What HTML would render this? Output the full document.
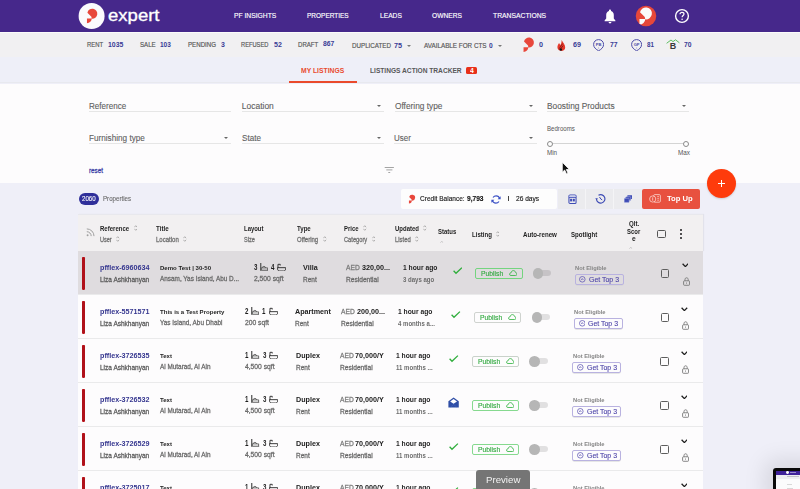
<!DOCTYPE html>
<html><head><meta charset="utf-8"><title>Listings</title><style>*{margin:0;padding:0;box-sizing:border-box}
html,body{width:800px;height:489px;overflow:hidden}
body{filter:blur(0.25px);background:#efeff8;font-family:"Liberation Sans",sans-serif;position:relative}
.abs{position:absolute}
.t{position:absolute;white-space:nowrap;line-height:1;transform-origin:0 0}
.n{-webkit-text-stroke:0.28px currentColor}
.m{-webkit-text-stroke:0.12px currentColor}</style></head><body>
<div class="abs" style="left:0;top:0;width:800px;height:32px;background:#46288b"></div>
<svg class="abs" style="left:0;top:0;overflow:visible" width="800" height="489" viewBox="0 0 800 489"><circle cx="91.6" cy="16" r="13" fill="#fbfafd"/><path d="M87.40 12.75A5.00 5.00 0 1 1 91.75 18.70L91.40 16.80ZM86.95 18.40H91.75A4.80 4.80 0 0 1 86.95 23.20Z" fill="#e8473b"/></svg>
<div class="t" style="left:107.50px;top:6.61px;font-size:17.00px;font-weight:normal;color:#ffffff;transform:scaleX(1.090);-webkit-text-stroke:0.35px #fff;">expert</div>
<div class="t" style="left:233.50px;top:12.40px;font-size:7.67px;font-weight:normal;color:#ffffff;transform:scaleX(0.880);-webkit-text-stroke:0.15px #fff;">PF INSIGHTS</div>
<div class="t" style="left:306.70px;top:12.40px;font-size:7.67px;font-weight:normal;color:#ffffff;transform:scaleX(0.847);-webkit-text-stroke:0.15px #fff;">PROPERTIES</div>
<div class="t" style="left:379.50px;top:12.40px;font-size:7.67px;font-weight:normal;color:#ffffff;transform:scaleX(0.870);-webkit-text-stroke:0.15px #fff;">LEADS</div>
<div class="t" style="left:432.20px;top:12.40px;font-size:7.67px;font-weight:normal;color:#ffffff;transform:scaleX(0.869);-webkit-text-stroke:0.15px #fff;">OWNERS</div>
<div class="t" style="left:493.00px;top:12.40px;font-size:7.67px;font-weight:normal;color:#ffffff;transform:scaleX(0.885);-webkit-text-stroke:0.15px #fff;">TRANSACTIONS</div>
<svg class="abs" style="left:603.6px;top:9px" width="12" height="16" viewBox="0 0 12 16"><path d="M6 0.6C6.6 0.6 7 1 7 1.6V2.1C8.7 2.6 9.8 4.1 9.8 6V9.6L11.4 11.6V12.3H0.6V11.6L2.2 9.6V6C2.2 4.1 3.3 2.6 5 2.1V1.6C5 1 5.4 0.6 6 0.6Z" fill="#fff"/><path d="M4.6 13.1H7.4C7.4 14 6.8 14.5 6 14.5C5.2 14.5 4.6 14 4.6 13.1Z" fill="#fff"/></svg>
<svg class="abs" style="left:0;top:0;overflow:visible" width="800" height="489" viewBox="0 0 800 489"><defs><clipPath id="avc"><circle cx="646" cy="16" r="10.25"/></clipPath></defs><circle cx="646" cy="16" r="10.25" fill="#e6473a"/><path clip-path="url(#avc)" d="M640.00 12.22A6.00 6.00 0 1 1 645.22 19.36L644.80 17.08ZM639.46 19.00H645.22A5.76 5.76 0 0 1 639.46 24.76Z" fill="#fbfbfb"/></svg>
<svg class="abs" style="left:674px;top:8px" width="16" height="16" viewBox="0 0 16 16"><circle cx="8" cy="8" r="6.4" fill="none" stroke="#fff" stroke-width="1.4"/><path d="M6 6.3C6 5.1 6.9 4.3 8 4.3C9.1 4.3 10 5.1 10 6.1C10 7.4 8.1 7.7 8.1 9.2" fill="none" stroke="#fff" stroke-width="1.2"/><circle cx="8.1" cy="11.2" r="0.8" fill="#fff"/></svg>
<div class="abs" style="left:0;top:32px;width:800px;height:25px;background:#f1f0f2;border-top:1px solid #fbfbfb"></div>
<div class="t" style="left:87.00px;top:41.35px;font-size:7.03px;font-weight:normal;color:#585858;transform:scaleX(0.841);-webkit-text-stroke:0.18px #585858;">RENT</div>
<div class="t" style="left:107.90px;top:40.60px;font-size:7.91px;font-weight:bold;color:#393c96;transform:scaleX(0.869);">1035</div>
<div class="t" style="left:139.75px;top:41.35px;font-size:7.03px;font-weight:normal;color:#585858;transform:scaleX(0.870);-webkit-text-stroke:0.18px #585858;">SALE</div>
<div class="t" style="left:160.40px;top:40.60px;font-size:7.91px;font-weight:bold;color:#393c96;transform:scaleX(0.822);">103</div>
<div class="t" style="left:188.10px;top:41.35px;font-size:7.03px;font-weight:normal;color:#585858;transform:scaleX(0.878);-webkit-text-stroke:0.18px #585858;">PENDING</div>
<div class="t" style="left:220.90px;top:40.60px;font-size:7.91px;font-weight:bold;color:#393c96;transform:scaleX(0.875);">3</div>
<div class="t" style="left:241.20px;top:41.35px;font-size:7.03px;font-weight:normal;color:#585858;transform:scaleX(0.818);-webkit-text-stroke:0.18px #585858;">REFUSED</div>
<div class="t" style="left:273.90px;top:40.60px;font-size:7.91px;font-weight:bold;color:#393c96;transform:scaleX(0.892);">52</div>
<div class="t" style="left:298.25px;top:41.05px;font-size:7.03px;font-weight:normal;color:#585858;transform:scaleX(0.864);-webkit-text-stroke:0.18px #585858;">DRAFT</div>
<div class="t" style="left:323.00px;top:40.30px;font-size:7.91px;font-weight:bold;color:#393c96;transform:scaleX(0.856);">867</div>
<div class="t" style="left:352.00px;top:42.25px;font-size:7.03px;font-weight:normal;color:#585858;transform:scaleX(0.888);-webkit-text-stroke:0.18px #585858;">DUPLICATED</div>
<div class="t" style="left:393.90px;top:41.50px;font-size:7.91px;font-weight:bold;color:#393c96;transform:scaleX(0.920);">75</div>
<div class="t" style="left:423.60px;top:42.25px;font-size:7.03px;font-weight:normal;color:#585858;transform:scaleX(0.899);-webkit-text-stroke:0.18px #585858;">AVAILABLE FOR CTS</div>
<div class="t" style="left:489.00px;top:41.50px;font-size:7.91px;font-weight:bold;color:#393c96;transform:scaleX(0.841);">0</div>
<div class="t" style="left:539.00px;top:40.50px;font-size:7.91px;font-weight:bold;color:#393c96;transform:scaleX(0.909);">0</div>
<div class="t" style="left:572.50px;top:40.50px;font-size:7.91px;font-weight:bold;color:#393c96;transform:scaleX(0.909);">69</div>
<div class="t" style="left:609.70px;top:40.50px;font-size:7.91px;font-weight:bold;color:#393c96;transform:scaleX(0.864);">77</div>
<div class="t" style="left:646.80px;top:40.50px;font-size:7.91px;font-weight:bold;color:#393c96;transform:scaleX(0.784);">81</div>
<div class="t" style="left:683.90px;top:40.50px;font-size:7.91px;font-weight:bold;color:#393c96;transform:scaleX(0.852);">70</div>
<div class="abs" style="left:406.6px;top:45.2px;width:0;height:0;border-left:2px solid transparent;border-right:2px solid transparent;border-top:2.6px solid #777"></div>
<div class="abs" style="left:498px;top:45.2px;width:0;height:0;border-left:2px solid transparent;border-right:2px solid transparent;border-top:2.6px solid #777"></div>
<svg class="abs" style="left:0;top:0;overflow:visible" width="800" height="489" viewBox="0 0 800 489"><path d="M524.00 41.55A5.00 5.00 0 1 1 528.35 47.50L528.00 45.60ZM523.55 47.20H528.35A4.80 4.80 0 0 1 523.55 52.00Z" fill="#e8473b"/></svg>
<svg class="abs" style="left:0;top:0;overflow:visible" width="800" height="489" viewBox="0 0 800 489"><path d="M561.6 40C563.2 42.6 565.2 44.8 565.2 47.4C565.2 49.6 563.5 50.9 561.4 50.9C559.2 50.9 557.4 49.6 557.4 47.3C557.4 45.5 558.5 44.2 559.1 43.1C559.5 44.2 560 44.8 560.5 45.1C561.2 43.6 561.7 41.8 561.6 40Z" fill="#e5392b"/><path d="M559.2 48.6L562.6 43.6M561 48.2L563.3 45.6" stroke="#6a0f0a" stroke-width="0.7"/><circle cx="560.8" cy="49.6" r="1.25" fill="#151515"/></svg>
<svg class="abs" style="left:593.2px;top:38.8px" width="11.2" height="12.4" viewBox="0 0 11.2 12.4"><path d="M5.6 0.6C8.5 0.6 10.6 2.7 10.6 5.5C10.6 8.4 8.2 10.4 5.6 11.8C3 10.4 0.6 8.4 0.6 5.5C0.6 2.7 2.7 0.6 5.6 0.6Z" fill="none" stroke="#4b4aa8" stroke-width="1"/><text x="5.6" y="6.7" font-size="4.1" font-weight="bold" text-anchor="middle" fill="#4b4aa8" font-family="Liberation Sans">PB</text><path d="M5 9.3L5.6 8.5L6.2 9.3Z" fill="#4b4aa8"/></svg>
<svg class="abs" style="left:631px;top:38.8px" width="11.2" height="12.4" viewBox="0 0 11.2 12.4"><path d="M5.6 0.6C8.5 0.6 10.6 2.7 10.6 5.5C10.6 8.4 8.2 10.4 5.6 11.8C3 10.4 0.6 8.4 0.6 5.5C0.6 2.7 2.7 0.6 5.6 0.6Z" fill="none" stroke="#4b4aa8" stroke-width="1"/><text x="5.6" y="6.7" font-size="4.1" font-weight="bold" text-anchor="middle" fill="#4b4aa8" font-family="Liberation Sans">GP</text><path d="M5 9.3L5.6 8.5L6.2 9.3Z" fill="#4b4aa8"/></svg>
<svg class="abs" style="left:666px;top:39px" width="14" height="11" viewBox="0 0 14 11"><path d="M0.6 4.3L5 1L7 2.6L9.5 0.8L13.4 3.8" fill="none" stroke="#4cb850" stroke-width="0.9"/></svg>
<div class="t" style="left:669.80px;top:41.52px;font-size:8.95px;font-weight:bold;color:#3a3a3a;">B</div>
<div class="abs" style="left:0;top:57px;width:800px;height:26px;background:#eeeff8;border-bottom:1px solid #e8e9ef"></div>
<div class="t" style="left:301.00px;top:66.90px;font-size:7.67px;font-weight:bold;color:#e94b2f;transform:scaleX(0.886);">MY LISTINGS</div>
<div class="abs" style="left:288.7px;top:81px;width:68.7px;height:2px;background:#ea4a2c"></div>
<div class="t" style="left:369.80px;top:66.90px;font-size:7.67px;font-weight:bold;color:#585858;transform:scaleX(0.864);">LISTINGS ACTION TRACKER</div>
<div class="abs" style="left:465.6px;top:66.7px;width:11.8px;height:7.6px;background:#e8301a;border-radius:1.5px"></div>
<div class="t" style="left:469.50px;top:66.68px;font-size:7.35px;font-weight:bold;color:#fff;transform:scaleX(0.929);">4</div>
<div class="abs" style="left:0;top:84px;width:800px;height:98.6px;background:#fdfcfd"></div>
<div class="t" style="left:88.90px;top:102.03px;font-size:8.47px;font-weight:normal;color:#606060;transform:scaleX(0.951);-webkit-text-stroke:0.1px #606060;">Reference</div>
<div class="abs" style="left:88.9px;top:111.0px;width:142.4px;height:1px;background:#e6e6e6"></div>
<div class="t" style="left:241.80px;top:102.03px;font-size:8.47px;font-weight:normal;color:#606060;-webkit-text-stroke:0.1px #606060;">Location</div>
<div class="abs" style="left:241.8px;top:111.0px;width:141.89999999999998px;height:1px;background:#e6e6e6"></div>
<div class="abs" style="left:376.8px;top:104.80000000000001px;width:0;height:0;border-left:2px solid transparent;border-right:2px solid transparent;border-top:2.5px solid #666"></div>
<div class="t" style="left:394.60px;top:102.03px;font-size:8.47px;font-weight:normal;color:#606060;transform:scaleX(0.980);-webkit-text-stroke:0.1px #606060;">Offering type</div>
<div class="abs" style="left:394.6px;top:111.0px;width:142.39999999999998px;height:1px;background:#e6e6e6"></div>
<div class="abs" style="left:529.2px;top:104.80000000000001px;width:0;height:0;border-left:2px solid transparent;border-right:2px solid transparent;border-top:2.5px solid #666"></div>
<div class="t" style="left:547.40px;top:102.03px;font-size:8.47px;font-weight:normal;color:#606060;transform:scaleX(0.983);-webkit-text-stroke:0.1px #606060;">Boosting Products</div>
<div class="abs" style="left:547.4px;top:111.0px;width:142.0px;height:1px;background:#e6e6e6"></div>
<div class="abs" style="left:682.2px;top:104.80000000000001px;width:0;height:0;border-left:2px solid transparent;border-right:2px solid transparent;border-top:2.5px solid #666"></div>
<div class="t" style="left:88.90px;top:134.03px;font-size:8.47px;font-weight:normal;color:#606060;transform:scaleX(0.965);-webkit-text-stroke:0.1px #606060;">Furnishing type</div>
<div class="abs" style="left:88.9px;top:143.0px;width:142.4px;height:1px;background:#e6e6e6"></div>
<div class="abs" style="left:224.2px;top:136.8px;width:0;height:0;border-left:2px solid transparent;border-right:2px solid transparent;border-top:2.5px solid #666"></div>
<div class="t" style="left:241.80px;top:134.03px;font-size:8.47px;font-weight:normal;color:#606060;transform:scaleX(0.955);-webkit-text-stroke:0.1px #606060;">State</div>
<div class="abs" style="left:241.8px;top:143.0px;width:141.89999999999998px;height:1px;background:#e6e6e6"></div>
<div class="abs" style="left:376.8px;top:136.8px;width:0;height:0;border-left:2px solid transparent;border-right:2px solid transparent;border-top:2.5px solid #666"></div>
<div class="t" style="left:394.20px;top:134.03px;font-size:8.47px;font-weight:normal;color:#606060;transform:scaleX(0.939);-webkit-text-stroke:0.1px #606060;">User</div>
<div class="abs" style="left:394.2px;top:143.0px;width:142.8px;height:1px;background:#e6e6e6"></div>
<div class="abs" style="left:529.2px;top:136.8px;width:0;height:0;border-left:2px solid transparent;border-right:2px solid transparent;border-top:2.5px solid #666"></div>
<div class="t" style="left:547.40px;top:124.85px;font-size:7.03px;font-weight:normal;color:#555;transform:scaleX(0.870);">Bedrooms</div>
<div class="abs" style="left:553px;top:143px;width:130px;height:1px;background:#d4d4d4"></div>
<div class="abs" style="left:547.0px;top:140.8px;width:6.4px;height:6.4px;border:1.1px solid #8a8a8a;border-radius:50%;background:#fff"></div>
<div class="abs" style="left:683.0px;top:140.8px;width:6.4px;height:6.4px;border:1.1px solid #8a8a8a;border-radius:50%;background:#fff"></div>
<div class="t" style="left:547.10px;top:150.38px;font-size:6.88px;font-weight:normal;color:#555;transform:scaleX(0.912);">Min</div>
<div class="t" style="left:678.00px;top:150.38px;font-size:6.88px;font-weight:normal;color:#555;transform:scaleX(0.924);">Max</div>
<div class="t n" style="left:89.00px;top:166.97px;font-size:7.60px;font-weight:normal;color:#3a3da6;transform:scaleX(0.823);">reset</div>
<svg class="abs" style="left:384px;top:166px" width="11" height="8" viewBox="0 0 11 8"><path d="M0.7 1.5H9.9M2.3 3.9H8.4M4.3 6.5H6.2" stroke="#9a9a9a" stroke-width="0.9"/></svg>
<svg class="abs" style="left:560.5px;top:161px" width="10" height="14" viewBox="0 0 10 14"><path d="M1.3 1.2V11.2L3.7 9.1L5.5 12.9L7 12.2L5.3 8.5H8.4Z" fill="#111" stroke="#fff" stroke-width="0.8" stroke-linejoin="round"/></svg>
<div class="abs" style="left:78.5px;top:193.2px;width:20.5px;height:11.9px;border-radius:6px;background:#2f2f9a"></div>
<div class="t" style="left:81.70px;top:195.15px;font-size:7.03px;font-weight:normal;color:#fff;transform:scaleX(0.875);-webkit-text-stroke:0.1px #fff;">2060</div>
<div class="t" style="left:102.90px;top:195.01px;font-size:7.19px;font-weight:normal;color:#666;transform:scaleX(0.854);-webkit-text-stroke:0.1px #666;">Properties</div>
<div class="abs" style="left:400.8px;top:189px;width:156.6px;height:20.1px;background:#fdfdfd;border-radius:2px"></div>
<svg class="abs" style="left:0;top:0;overflow:visible" width="800" height="489" viewBox="0 0 800 489"><path d="M409.20 197.11A3.00 3.00 0 1 1 411.81 200.68L411.60 199.54ZM408.93 200.50H411.81A2.88 2.88 0 0 1 408.93 203.38Z" fill="#e8473b"/></svg>
<div class="t" style="left:419.80px;top:194.78px;font-size:7.35px;font-weight:normal;color:#1a1a1a;transform:scaleX(0.889);-webkit-text-stroke:0.15px #1a1a1a;">Credit Balance:</div>
<div class="t" style="left:466.90px;top:194.78px;font-size:7.35px;font-weight:bold;color:#111;transform:scaleX(0.897);-webkit-text-stroke:0.15px #111;">9,793</div>
<svg class="abs" style="left:491px;top:195px" width="10" height="9" viewBox="0 0 10 9"><path d="M8.6 3.6C8.2 2 6.8 0.9 5.1 0.9C3.8 0.9 2.7 1.5 2 2.5M1.4 5.4C1.8 7 3.2 8.1 4.9 8.1C6.2 8.1 7.3 7.5 8 6.5" fill="none" stroke="#3a50c4" stroke-width="1.2"/><path d="M9.6 1.2V4.3H6.6Z" fill="#3a50c4"/><path d="M0.4 7.8V4.7H3.4Z" fill="#3a50c4"/></svg>
<div class="abs" style="left:508.2px;top:196.3px;width:0.9px;height:5.2px;background:#444"></div>
<div class="t" style="left:516.40px;top:194.58px;font-size:7.35px;font-weight:normal;color:#1a1a1a;transform:scaleX(0.897);-webkit-text-stroke:0.15px #1a1a1a;">26 days</div>
<div class="abs" style="left:557.6px;top:189px;width:84px;height:20.2px;background:#ebebee"></div>
<div class="abs" style="left:585px;top:189px;width:0.8px;height:20.2px;background:#f4f4f6"></div>
<div class="abs" style="left:613.2px;top:189px;width:0.8px;height:20.2px;background:#f4f4f6"></div>
<svg class="abs" style="left:567.6px;top:194.3px" width="9" height="10.5" viewBox="0 0 9 10.5"><rect x="0.95" y="0.95" width="7.1" height="8.6" rx="1.1" fill="none" stroke="#3d4bb5" stroke-width="1.05"/><rect x="1.4" y="1.4" width="6.2" height="1.9" fill="#c9cdeb"/><path d="M1 3.5H8" stroke="#3d4bb5" stroke-width="0.8"/><rect x="2.1" y="4.8" width="2" height="2.6" fill="#3d4bb5"/><rect x="4.8" y="4.8" width="2" height="2.6" fill="#3d4bb5"/></svg>
<svg class="abs" style="left:595px;top:194.3px" width="11" height="10" viewBox="0 0 11 10"><path d="M3.5 1.3A4.2 4.2 0 1 1 1.5 5.2" fill="none" stroke="#3d4bb5" stroke-width="1.15"/><path d="M0.3 4.3L1.6 6.4L2.9 4.3Z" fill="#3d4bb5"/><path d="M4.5 3L5.8 5L7.2 5.9" fill="none" stroke="#3d4bb5" stroke-width="1"/></svg>
<svg class="abs" style="left:623.8px;top:195.4px" width="8.5" height="7.6" viewBox="0 0 8.5 7.6"><rect x="3.3" y="0.2" width="5" height="3.9" rx="0.6" fill="#3d4bb5"/><rect x="1.75" y="1.7" width="5" height="3.9" rx="0.6" fill="#3d4bb5" stroke="#b8bfe8" stroke-width="0.5"/><rect x="0.2" y="3.3" width="5" height="4.1" rx="0.6" fill="#3d4bb5" stroke="#b8bfe8" stroke-width="0.5"/></svg>
<div class="abs" style="left:641.7px;top:189.4px;width:58.2px;height:19.2px;background:#e8513f;border-radius:2px"></div>
<svg class="abs" style="left:648.5px;top:194px" width="12" height="9" viewBox="0 0 12 9"><rect x="4.6" y="0.6" width="6.8" height="7.6" rx="1.2" fill="none" stroke="#fbd5cf" stroke-width="0.8"/><path d="M8.2 2.4H10M8.2 4.3H10M8.2 6.2H10" stroke="#fbd5cf" stroke-width="0.7"/><circle cx="3.7" cy="5" r="3.1" fill="#e8513f" stroke="#fbd5cf" stroke-width="0.8"/><path d="M3.7 3.3V6.7" stroke="#fbd5cf" stroke-width="0.8"/></svg>
<div class="t" style="left:667.30px;top:194.57px;font-size:7.83px;font-weight:bold;color:#fff;transform:scaleX(0.978);">Top Up</div>
<div class="abs" style="left:707.2px;top:169px;width:28.9px;height:28.9px;border-radius:50%;background:#fe3b0c;box-shadow:0 1px 2px rgba(0,0,0,0.15)"></div>
<div class="abs" style="left:718px;top:182.9px;width:7.3px;height:1.1px;background:#fff"></div>
<div class="abs" style="left:721.2px;top:179.8px;width:1.1px;height:7.3px;background:#fff"></div>
<div class="abs" style="left:78.1px;top:214.4px;width:625.4px;height:36.6px;background:#f2f0f1;border-top:1px solid #e8e8ed;box-shadow:1px 0 1px rgba(0,0,0,0.05)"></div>
<svg class="abs" style="left:85.5px;top:228px" width="9" height="8.5" viewBox="0 0 9 8.5"><path d="M0.8 0.9A7.2 7.2 0 0 1 8 8.1M0.8 3.7A4.4 4.4 0 0 1 5.2 8.1" fill="none" stroke="#a0a0a0" stroke-width="1"/><circle cx="1.6" cy="7.2" r="0.95" fill="#a0a0a0"/></svg>
<div class="t" style="left:99.70px;top:225.25px;font-size:7.03px;font-weight:bold;color:#1e1e1e;transform:scaleX(0.858);">Reference</div>
<svg class="abs" style="left:133.6px;top:225.4px" width="3.5" height="6" viewBox="0 0 3.5 6"><path d="M0.4 2.2L1.75 0.7L3.1 2.2M0.4 3.8L1.75 5.3L3.1 3.8" fill="none" stroke="#999" stroke-width="0.75"/></svg>
<div class="t" style="left:156.00px;top:225.25px;font-size:7.03px;font-weight:bold;color:#1e1e1e;transform:scaleX(0.886);">Title</div>
<div class="t" style="left:243.50px;top:225.25px;font-size:7.03px;font-weight:bold;color:#1e1e1e;transform:scaleX(0.846);">Layout</div>
<div class="t" style="left:297.40px;top:225.25px;font-size:7.03px;font-weight:bold;color:#1e1e1e;transform:scaleX(0.868);">Type</div>
<div class="t" style="left:343.70px;top:225.25px;font-size:7.03px;font-weight:bold;color:#1e1e1e;transform:scaleX(0.848);">Price</div>
<svg class="abs" style="left:363px;top:225.4px" width="3.5" height="6" viewBox="0 0 3.5 6"><path d="M0.4 2.2L1.75 0.7L3.1 2.2M0.4 3.8L1.75 5.3L3.1 3.8" fill="none" stroke="#999" stroke-width="0.75"/></svg>
<div class="t" style="left:394.90px;top:225.25px;font-size:7.03px;font-weight:bold;color:#1e1e1e;transform:scaleX(0.853);">Updated</div>
<svg class="abs" style="left:423.2px;top:225.4px" width="3.5" height="6" viewBox="0 0 3.5 6"><path d="M0.4 2.2L1.75 0.7L3.1 2.2M0.4 3.8L1.75 5.3L3.1 3.8" fill="none" stroke="#999" stroke-width="0.75"/></svg>
<div class="t n" style="left:99.70px;top:235.95px;font-size:7.03px;font-weight:normal;color:#6e6e6e;transform:scaleX(0.788);">User</div>
<svg class="abs" style="left:116px;top:236.4px" width="3.5" height="6" viewBox="0 0 3.5 6"><path d="M0.4 2.2L1.75 0.7L3.1 2.2M0.4 3.8L1.75 5.3L3.1 3.8" fill="none" stroke="#999" stroke-width="0.75"/></svg>
<div class="t n" style="left:156.00px;top:235.95px;font-size:7.03px;font-weight:normal;color:#6e6e6e;transform:scaleX(0.857);">Location</div>
<svg class="abs" style="left:183px;top:236.4px" width="3.5" height="6" viewBox="0 0 3.5 6"><path d="M0.4 2.2L1.75 0.7L3.1 2.2M0.4 3.8L1.75 5.3L3.1 3.8" fill="none" stroke="#999" stroke-width="0.75"/></svg>
<div class="t n" style="left:243.50px;top:235.95px;font-size:7.03px;font-weight:normal;color:#6e6e6e;transform:scaleX(0.797);">Size</div>
<div class="t n" style="left:297.40px;top:235.95px;font-size:7.03px;font-weight:normal;color:#6e6e6e;transform:scaleX(0.852);">Offering</div>
<svg class="abs" style="left:323.2px;top:236.4px" width="3.5" height="6" viewBox="0 0 3.5 6"><path d="M0.4 2.2L1.75 0.7L3.1 2.2M0.4 3.8L1.75 5.3L3.1 3.8" fill="none" stroke="#999" stroke-width="0.75"/></svg>
<div class="t n" style="left:343.70px;top:235.95px;font-size:7.03px;font-weight:normal;color:#6e6e6e;transform:scaleX(0.813);">Category</div>
<svg class="abs" style="left:371.6px;top:236.4px" width="3.5" height="6" viewBox="0 0 3.5 6"><path d="M0.4 2.2L1.75 0.7L3.1 2.2M0.4 3.8L1.75 5.3L3.1 3.8" fill="none" stroke="#999" stroke-width="0.75"/></svg>
<div class="t n" style="left:394.90px;top:235.95px;font-size:7.03px;font-weight:normal;color:#6e6e6e;transform:scaleX(0.836);">Listed</div>
<svg class="abs" style="left:415px;top:236.4px" width="3.5" height="6" viewBox="0 0 3.5 6"><path d="M0.4 2.2L1.75 0.7L3.1 2.2M0.4 3.8L1.75 5.3L3.1 3.8" fill="none" stroke="#999" stroke-width="0.75"/></svg>
<div class="t" style="left:438.30px;top:227.95px;font-size:7.03px;font-weight:bold;color:#1e1e1e;transform:scaleX(0.851);">Status</div>
<svg class="abs" style="left:440px;top:240.6px" width="3.5" height="2" viewBox="0 0 3.5 2"><path d="M0.4 1.6L1.75 0.3L3.1 1.6" fill="none" stroke="#aaa" stroke-width="0.6"/></svg>
<div class="t" style="left:471.60px;top:230.75px;font-size:7.03px;font-weight:bold;color:#1e1e1e;transform:scaleX(0.868);">Listing</div>
<svg class="abs" style="left:495.8px;top:231px" width="3.5" height="6" viewBox="0 0 3.5 6"><path d="M0.4 2.2L1.75 0.7L3.1 2.2M0.4 3.8L1.75 5.3L3.1 3.8" fill="none" stroke="#999" stroke-width="0.75"/></svg>
<div class="t" style="left:523.00px;top:230.75px;font-size:7.03px;font-weight:bold;color:#1e1e1e;transform:scaleX(0.878);">Auto-renew</div>
<div class="t" style="left:570.60px;top:230.75px;font-size:7.03px;font-weight:bold;color:#1e1e1e;transform:scaleX(0.866);">Spotlight</div>
<div class="t" style="left:628.75px;top:220.25px;font-size:7.03px;font-weight:bold;color:#1e1e1e;transform:scaleX(0.874);">Qlt.</div>
<div class="t" style="left:627.10px;top:228.15px;font-size:7.03px;font-weight:bold;color:#1e1e1e;transform:scaleX(0.850);">Scor</div>
<div class="t" style="left:631.90px;top:235.15px;font-size:7.03px;font-weight:bold;color:#1e1e1e;transform:scaleX(0.946);">e</div>
<svg class="abs" style="left:629px;top:246.5px" width="3.5" height="2" viewBox="0 0 3.5 2"><path d="M0.4 1.6L1.75 0.3L3.1 1.6" fill="none" stroke="#aaa" stroke-width="0.6"/></svg>
<div class="abs" style="left:657.4px;top:230.1px;width:8.4px;height:8.3px;border:1.2px solid #555;border-radius:1.5px"></div>
<div class="abs" style="left:680.1px;top:229.4px;width:2px;height:2px;border-radius:50%;background:#1a1a1a"></div>
<div class="abs" style="left:680.1px;top:232.9px;width:2px;height:2px;border-radius:50%;background:#1a1a1a"></div>
<div class="abs" style="left:680.1px;top:236.5px;width:2px;height:2px;border-radius:50%;background:#1a1a1a"></div>
<div class="abs" style="left:78.1px;top:251px;width:625.4px;height:44px;background:#dfdcdf;border-bottom:1.2px solid #eaeaeb"></div>
<div class="abs" style="left:82.2px;top:256.7px;width:2.8px;height:33.5px;background:#b0111a;border-radius:1.4px;box-shadow:0 0 0.5px #e02020"></div>
<div class="t" style="left:99.75px;top:263.65px;font-size:7.56px;font-weight:bold;color:#35368f;transform:scaleX(0.953);">pfflex-6960634</div>
<div class="t n" style="left:99.75px;top:276.87px;font-size:7.12px;font-weight:normal;color:#5c5c5c;transform:scaleX(0.916);">Liza Ashkhanyan</div>
<div class="t" style="left:160.40px;top:266.16px;font-size:5.96px;font-weight:bold;color:#1e1e1e;transform:scaleX(1.017);">Demo Test | 30-50</div>
<div class="t n" style="left:160.40px;top:275.57px;font-size:7.12px;font-weight:normal;color:#6a6a6a;transform:scaleX(0.899);">Ansam, Yas Island, Abu D...</div>
<div class="t" style="left:253.50px;top:264.01px;font-size:8.14px;font-weight:bold;color:#1e1e1e;transform:scaleX(0.760);">3</div>
<svg class="abs" style="left:259.84999999999997px;top:263.0px" width="8.3" height="8" viewBox="0 0 8.5 8"><path d="M0.75 0V7.9" stroke="#555" stroke-width="1.3"/><path d="M1.3 7.3H7.9V7.9" fill="none" stroke="#555" stroke-width="1"/><path d="M1.3 7.2V4.9H7.8V7.2" fill="none" stroke="#555" stroke-width="0.9"/><path d="M2.2 4.9C2.3 3.9 3 3.4 3.9 3.4C4.9 3.4 5.7 3.9 5.9 4.9" fill="none" stroke="#555" stroke-width="0.9"/></svg>
<div class="t" style="left:270.50px;top:264.01px;font-size:8.14px;font-weight:bold;color:#1e1e1e;transform:scaleX(0.760);">4</div>
<svg class="abs" style="left:276.6px;top:262.7px" width="9.2" height="8.7" viewBox="0 0 8.5 8"><path d="M0.9 4.6V1.2H3V2.3" fill="none" stroke="#2a2a2a" stroke-width="0.85"/><path d="M0.5 4.3H8V5.4C8 6.6 7.2 7.4 6 7.4H2.5C1.3 7.4 0.5 6.6 0.5 5.4Z" fill="none" stroke="#2a2a2a" stroke-width="0.85"/></svg>
<div class="t n" style="left:253.50px;top:276.37px;font-size:7.12px;font-weight:normal;color:#6a6a6a;transform:scaleX(0.946);">2,500 sqft</div>
<div class="t" style="left:303.40px;top:263.70px;font-size:7.56px;font-weight:bold;color:#222;transform:scaleX(0.951);">Villa</div>
<div class="t n" style="left:303.40px;top:276.87px;font-size:7.12px;font-weight:normal;color:#6a6a6a;transform:scaleX(0.911);">Rent</div>
<div class="t n" style="left:346.00px;top:263.70px;font-size:7.56px;font-weight:normal;color:#7a7a7a;transform:scaleX(0.882);">AED</div>
<div class="t" style="left:361.60px;top:263.70px;font-size:7.56px;font-weight:bold;color:#222;transform:scaleX(0.955);">320,00...</div>
<div class="t n" style="left:346.00px;top:276.87px;font-size:7.12px;font-weight:normal;color:#6a6a6a;transform:scaleX(0.931);">Residential</div>
<div class="t" style="left:403.40px;top:263.70px;font-size:7.56px;font-weight:bold;color:#1e1e1e;transform:scaleX(0.893);">1 hour ago</div>
<div class="t" style="left:403.40px;top:276.87px;font-size:7.12px;font-weight:bold;color:#6c6c6c;transform:scaleX(0.850);">3 days ago</div>
<svg class="abs" style="left:452.5px;top:267.4px" width="9.5" height="7.5" viewBox="0 0 9.5 7.5"><path d="M0.6 3.8L3 6.3L8.9 0.6" fill="none" stroke="#2fae3c" stroke-width="1.3"/></svg>
<div class="abs" style="left:475px;top:268.2px;width:48.3px;height:10.6px;border:1px solid #74d47f;border-radius:2px;background:transparent"></div>
<div class="t m" style="left:480.90px;top:270.15px;font-size:7.27px;font-weight:normal;color:#2fa83e;transform:scaleX(0.929);">Publish</div>
<svg class="abs" style="left:508.8px;top:270.4px" width="8.6" height="6" viewBox="0 0 8.6 6"><path d="M2 5.5H6.6C7.6 5.5 8.1 4.8 8.1 4.1C8.1 3.3 7.5 2.8 6.8 2.8C6.5 1.5 5.6 0.6 4.4 0.6C3.1 0.6 2.2 1.6 2.1 2.8C1.2 2.9 0.5 3.4 0.5 4.2C0.5 5 1.1 5.5 2 5.5Z" fill="none" stroke="#35b545" stroke-width="0.85"/></svg>
<div class="abs" style="left:536.75px;top:270.1px;width:14.4px;height:6px;border-radius:3px;background:rgba(0,0,0,0.11)"></div>
<div class="abs" style="left:532.75px;top:268.4px;width:10.6px;height:10.6px;border-radius:50%;background:#b6b6b6"></div>
<div class="t" style="left:575.15px;top:265.21px;font-size:6.25px;font-weight:bold;color:#858585;transform:scaleX(0.916);">Not Eligible</div>
<div class="abs" style="left:574.6px;top:274.2px;width:49px;height:10.8px;border:1px solid #b9b2e0;border-radius:2px;box-shadow:0 0.6px 0 #d0d0d0"></div>
<svg class="abs" style="left:579.4px;top:276.3px" width="6.6" height="6.6" viewBox="0 0 6.6 6.6"><circle cx="3.3" cy="3.3" r="2.8" fill="none" stroke="#5b52b2" stroke-width="0.75"/><path d="M2.3 3.9L3.3 2.6L4.3 3.9" fill="none" stroke="#5b52b2" stroke-width="0.8"/></svg>
<div class="t m" style="left:589.10px;top:275.95px;font-size:7.27px;font-weight:normal;color:#4d44a8;transform:scaleX(0.956);">Get Top 3</div>
<div class="abs" style="left:660.9px;top:269.2px;width:8.4px;height:8.5px;border:1.3px solid #5e5e5e;border-radius:1.5px"></div>
<svg class="abs" style="left:681.6px;top:262.6px" width="6.8" height="4.6" viewBox="0 0 6.8 4.6"><path d="M0.6 0.7L3.4 3.6L6.2 0.7" fill="none" stroke="#1e1e1e" stroke-width="1.3"/></svg>
<svg class="abs" style="left:682.6px;top:277.1px" width="7.2" height="8.8" viewBox="0 0 7.2 8.8"><path d="M2 3.8V2.5C2 1.5 2.7 0.8 3.6 0.8C4.5 0.8 5.2 1.5 5.2 2.5V3.8" fill="none" stroke="#777" stroke-width="0.9"/><rect x="0.6" y="3.8" width="6" height="4.5" rx="0.8" fill="none" stroke="#777" stroke-width="0.9"/><rect x="3.2" y="5.5" width="0.8" height="1.2" fill="#777"/></svg>
<div class="abs" style="left:78.1px;top:295px;width:625.4px;height:44px;background:#fdfcfd;border-bottom:1.2px solid #eaeaeb"></div>
<div class="abs" style="left:82.2px;top:300.7px;width:2.8px;height:33.5px;background:#b0111a;border-radius:1.4px;box-shadow:0 0 0.5px #e02020"></div>
<div class="t" style="left:99.75px;top:307.65px;font-size:7.56px;font-weight:bold;color:#35368f;transform:scaleX(0.953);">pfflex-5571571</div>
<div class="t n" style="left:99.75px;top:320.87px;font-size:7.12px;font-weight:normal;color:#5c5c5c;transform:scaleX(0.916);">Liza Ashkhanyan</div>
<div class="t" style="left:160.40px;top:310.16px;font-size:5.96px;font-weight:bold;color:#1e1e1e;transform:scaleX(1.017);">This is a Test Property</div>
<div class="t n" style="left:160.40px;top:319.57px;font-size:7.12px;font-weight:normal;color:#6a6a6a;transform:scaleX(0.899);">Yas Island, Abu Dhabi</div>
<div class="t" style="left:244.60px;top:308.01px;font-size:8.14px;font-weight:bold;color:#1e1e1e;transform:scaleX(0.760);">2</div>
<svg class="abs" style="left:250.79999999999998px;top:307.0px" width="8.3" height="8" viewBox="0 0 8.5 8"><path d="M0.75 0V7.9" stroke="#555" stroke-width="1.3"/><path d="M1.3 7.3H7.9V7.9" fill="none" stroke="#555" stroke-width="1"/><path d="M1.3 7.2V4.9H7.8V7.2" fill="none" stroke="#555" stroke-width="0.9"/><path d="M2.2 4.9C2.3 3.9 3 3.4 3.9 3.4C4.9 3.4 5.7 3.9 5.9 4.9" fill="none" stroke="#555" stroke-width="0.9"/></svg>
<div class="t" style="left:262.20px;top:308.01px;font-size:8.14px;font-weight:bold;color:#1e1e1e;transform:scaleX(0.760);">1</div>
<svg class="abs" style="left:268.5px;top:306.7px" width="9.2" height="8.7" viewBox="0 0 8.5 8"><path d="M0.9 4.6V1.2H3V2.3" fill="none" stroke="#2a2a2a" stroke-width="0.85"/><path d="M0.5 4.3H8V5.4C8 6.6 7.2 7.4 6 7.4H2.5C1.3 7.4 0.5 6.6 0.5 5.4Z" fill="none" stroke="#2a2a2a" stroke-width="0.85"/></svg>
<div class="t n" style="left:244.60px;top:320.37px;font-size:7.12px;font-weight:normal;color:#6a6a6a;transform:scaleX(0.946);">200 sqft</div>
<div class="t" style="left:295.20px;top:307.70px;font-size:7.56px;font-weight:bold;color:#222;transform:scaleX(0.951);">Apartment</div>
<div class="t n" style="left:295.20px;top:320.87px;font-size:7.12px;font-weight:normal;color:#6a6a6a;transform:scaleX(0.911);">Rent</div>
<div class="t n" style="left:341.40px;top:307.70px;font-size:7.56px;font-weight:normal;color:#7a7a7a;transform:scaleX(0.882);">AED</div>
<div class="t" style="left:357.00px;top:307.70px;font-size:7.56px;font-weight:bold;color:#222;transform:scaleX(0.955);">200,00...</div>
<div class="t n" style="left:341.40px;top:320.87px;font-size:7.12px;font-weight:normal;color:#6a6a6a;transform:scaleX(0.931);">Residential</div>
<div class="t" style="left:398.30px;top:307.70px;font-size:7.56px;font-weight:bold;color:#1e1e1e;transform:scaleX(0.893);">1 hour ago</div>
<div class="t" style="left:398.30px;top:320.87px;font-size:7.12px;font-weight:bold;color:#6c6c6c;transform:scaleX(0.850);">4 months a...</div>
<svg class="abs" style="left:451.4px;top:311.4px" width="9.5" height="7.5" viewBox="0 0 9.5 7.5"><path d="M0.6 3.8L3 6.3L8.9 0.6" fill="none" stroke="#2fae3c" stroke-width="1.3"/></svg>
<div class="abs" style="left:474.1px;top:312.2px;width:47.15px;height:10.6px;border:1px solid #cfd3cf;border-radius:2px;background:transparent"></div>
<div class="t m" style="left:480.00px;top:314.15px;font-size:7.27px;font-weight:normal;color:#2fa83e;transform:scaleX(0.929);">Publish</div>
<svg class="abs" style="left:507.90000000000003px;top:314.4px" width="8.6" height="6" viewBox="0 0 8.6 6"><path d="M2 5.5H6.6C7.6 5.5 8.1 4.8 8.1 4.1C8.1 3.3 7.5 2.8 6.8 2.8C6.5 1.5 5.6 0.6 4.4 0.6C3.1 0.6 2.2 1.6 2.1 2.8C1.2 2.9 0.5 3.4 0.5 4.2C0.5 5 1.1 5.5 2 5.5Z" fill="none" stroke="#35b545" stroke-width="0.85"/></svg>
<div class="abs" style="left:535.6px;top:314.1px;width:14.4px;height:6px;border-radius:3px;background:rgba(0,0,0,0.11)"></div>
<div class="abs" style="left:531.6px;top:312.4px;width:10.6px;height:10.6px;border-radius:50%;background:#b6b6b6"></div>
<div class="t" style="left:574.20px;top:309.21px;font-size:6.25px;font-weight:bold;color:#858585;transform:scaleX(0.916);">Not Eligible</div>
<div class="abs" style="left:573.9px;top:318.2px;width:49px;height:10.8px;border:1px solid #b9b2e0;border-radius:2px;box-shadow:0 0.6px 0 #d0d0d0"></div>
<svg class="abs" style="left:578.6999999999999px;top:320.3px" width="6.6" height="6.6" viewBox="0 0 6.6 6.6"><circle cx="3.3" cy="3.3" r="2.8" fill="none" stroke="#5b52b2" stroke-width="0.75"/><path d="M2.3 3.9L3.3 2.6L4.3 3.9" fill="none" stroke="#5b52b2" stroke-width="0.8"/></svg>
<div class="t m" style="left:588.40px;top:319.95px;font-size:7.27px;font-weight:normal;color:#4d44a8;transform:scaleX(0.956);">Get Top 3</div>
<div class="abs" style="left:661px;top:313.2px;width:8.4px;height:8.5px;border:1.3px solid #5e5e5e;border-radius:1.5px"></div>
<svg class="abs" style="left:680.8000000000001px;top:306.6px" width="6.8" height="4.6" viewBox="0 0 6.8 4.6"><path d="M0.6 0.7L3.4 3.6L6.2 0.7" fill="none" stroke="#1e1e1e" stroke-width="1.3"/></svg>
<svg class="abs" style="left:681.8000000000001px;top:321.1px" width="7.2" height="8.8" viewBox="0 0 7.2 8.8"><path d="M2 3.8V2.5C2 1.5 2.7 0.8 3.6 0.8C4.5 0.8 5.2 1.5 5.2 2.5V3.8" fill="none" stroke="#777" stroke-width="0.9"/><rect x="0.6" y="3.8" width="6" height="4.5" rx="0.8" fill="none" stroke="#777" stroke-width="0.9"/><rect x="3.2" y="5.5" width="0.8" height="1.2" fill="#777"/></svg>
<div class="abs" style="left:78.1px;top:339px;width:625.4px;height:44px;background:#fdfcfd;border-bottom:1.2px solid #eaeaeb"></div>
<div class="abs" style="left:82.2px;top:344.7px;width:2.8px;height:33.5px;background:#b0111a;border-radius:1.4px;box-shadow:0 0 0.5px #e02020"></div>
<div class="t" style="left:99.75px;top:351.65px;font-size:7.56px;font-weight:bold;color:#35368f;transform:scaleX(0.953);">pfflex-3726535</div>
<div class="t n" style="left:99.75px;top:364.87px;font-size:7.12px;font-weight:normal;color:#5c5c5c;transform:scaleX(0.916);">Liza Ashkhanyan</div>
<div class="t" style="left:160.40px;top:354.16px;font-size:5.96px;font-weight:bold;color:#1e1e1e;transform:scaleX(1.017);">Text</div>
<div class="t n" style="left:160.40px;top:363.57px;font-size:7.12px;font-weight:normal;color:#6a6a6a;transform:scaleX(0.899);">Al Mutarad, Al Ain</div>
<div class="t" style="left:245.10px;top:352.01px;font-size:8.14px;font-weight:bold;color:#1e1e1e;transform:scaleX(0.760);">1</div>
<svg class="abs" style="left:251.39999999999998px;top:351.0px" width="8.3" height="8" viewBox="0 0 8.5 8"><path d="M0.75 0V7.9" stroke="#555" stroke-width="1.3"/><path d="M1.3 7.3H7.9V7.9" fill="none" stroke="#555" stroke-width="1"/><path d="M1.3 7.2V4.9H7.8V7.2" fill="none" stroke="#555" stroke-width="0.9"/><path d="M2.2 4.9C2.3 3.9 3 3.4 3.9 3.4C4.9 3.4 5.7 3.9 5.9 4.9" fill="none" stroke="#555" stroke-width="0.9"/></svg>
<div class="t" style="left:263.00px;top:352.01px;font-size:8.14px;font-weight:bold;color:#1e1e1e;transform:scaleX(0.760);">3</div>
<svg class="abs" style="left:269px;top:350.7px" width="9.2" height="8.7" viewBox="0 0 8.5 8"><path d="M0.9 4.6V1.2H3V2.3" fill="none" stroke="#2a2a2a" stroke-width="0.85"/><path d="M0.5 4.3H8V5.4C8 6.6 7.2 7.4 6 7.4H2.5C1.3 7.4 0.5 6.6 0.5 5.4Z" fill="none" stroke="#2a2a2a" stroke-width="0.85"/></svg>
<div class="t n" style="left:245.10px;top:364.37px;font-size:7.12px;font-weight:normal;color:#6a6a6a;transform:scaleX(0.946);">4,500 sqft</div>
<div class="t" style="left:296.00px;top:351.70px;font-size:7.56px;font-weight:bold;color:#222;transform:scaleX(0.951);">Duplex</div>
<div class="t n" style="left:296.00px;top:364.87px;font-size:7.12px;font-weight:normal;color:#6a6a6a;transform:scaleX(0.911);">Rent</div>
<div class="t n" style="left:340.00px;top:351.70px;font-size:7.56px;font-weight:normal;color:#7a7a7a;transform:scaleX(0.882);">AED</div>
<div class="t" style="left:355.10px;top:351.70px;font-size:7.56px;font-weight:bold;color:#222;transform:scaleX(0.955);">70,000/Y</div>
<div class="t n" style="left:340.00px;top:364.87px;font-size:7.12px;font-weight:normal;color:#6a6a6a;transform:scaleX(0.931);">Residential</div>
<div class="t" style="left:395.60px;top:351.70px;font-size:7.56px;font-weight:bold;color:#1e1e1e;transform:scaleX(0.893);">1 hour ago</div>
<div class="t" style="left:395.60px;top:364.87px;font-size:7.12px;font-weight:bold;color:#6c6c6c;transform:scaleX(0.850);">11 months ...</div>
<svg class="abs" style="left:449.1px;top:355.4px" width="9.5" height="7.5" viewBox="0 0 9.5 7.5"><path d="M0.6 3.8L3 6.3L8.9 0.6" fill="none" stroke="#2fae3c" stroke-width="1.3"/></svg>
<div class="abs" style="left:471.85px;top:356.2px;width:47.15px;height:10.6px;border:1px solid #c9d2ca;border-radius:2px;background:transparent"></div>
<div class="t m" style="left:477.75px;top:358.15px;font-size:7.27px;font-weight:normal;color:#2fa83e;transform:scaleX(0.929);">Publish</div>
<svg class="abs" style="left:505.65000000000003px;top:358.4px" width="8.6" height="6" viewBox="0 0 8.6 6"><path d="M2 5.5H6.6C7.6 5.5 8.1 4.8 8.1 4.1C8.1 3.3 7.5 2.8 6.8 2.8C6.5 1.5 5.6 0.6 4.4 0.6C3.1 0.6 2.2 1.6 2.1 2.8C1.2 2.9 0.5 3.4 0.5 4.2C0.5 5 1.1 5.5 2 5.5Z" fill="none" stroke="#35b545" stroke-width="0.85"/></svg>
<div class="abs" style="left:533.4px;top:358.1px;width:14.4px;height:6px;border-radius:3px;background:rgba(0,0,0,0.11)"></div>
<div class="abs" style="left:529.4px;top:356.4px;width:10.6px;height:10.6px;border-radius:50%;background:#b6b6b6"></div>
<div class="t" style="left:572.60px;top:353.21px;font-size:6.25px;font-weight:bold;color:#858585;transform:scaleX(0.916);">Not Eligible</div>
<div class="abs" style="left:572.3px;top:362.2px;width:49px;height:10.8px;border:1px solid #b9b2e0;border-radius:2px;box-shadow:0 0.6px 0 #d0d0d0"></div>
<svg class="abs" style="left:577.0999999999999px;top:364.3px" width="6.6" height="6.6" viewBox="0 0 6.6 6.6"><circle cx="3.3" cy="3.3" r="2.8" fill="none" stroke="#5b52b2" stroke-width="0.75"/><path d="M2.3 3.9L3.3 2.6L4.3 3.9" fill="none" stroke="#5b52b2" stroke-width="0.8"/></svg>
<div class="t m" style="left:586.80px;top:363.95px;font-size:7.27px;font-weight:normal;color:#4d44a8;transform:scaleX(0.956);">Get Top 3</div>
<div class="abs" style="left:660.3px;top:357.2px;width:8.4px;height:8.5px;border:1.3px solid #5e5e5e;border-radius:1.5px"></div>
<svg class="abs" style="left:680.7px;top:350.6px" width="6.8" height="4.6" viewBox="0 0 6.8 4.6"><path d="M0.6 0.7L3.4 3.6L6.2 0.7" fill="none" stroke="#1e1e1e" stroke-width="1.3"/></svg>
<svg class="abs" style="left:681.7px;top:365.1px" width="7.2" height="8.8" viewBox="0 0 7.2 8.8"><path d="M2 3.8V2.5C2 1.5 2.7 0.8 3.6 0.8C4.5 0.8 5.2 1.5 5.2 2.5V3.8" fill="none" stroke="#777" stroke-width="0.9"/><rect x="0.6" y="3.8" width="6" height="4.5" rx="0.8" fill="none" stroke="#777" stroke-width="0.9"/><rect x="3.2" y="5.5" width="0.8" height="1.2" fill="#777"/></svg>
<div class="abs" style="left:78.1px;top:383px;width:625.4px;height:44px;background:#fdfcfd;border-bottom:1.2px solid #eaeaeb"></div>
<div class="abs" style="left:82.2px;top:388.7px;width:2.8px;height:33.5px;background:#b0111a;border-radius:1.4px;box-shadow:0 0 0.5px #e02020"></div>
<div class="t" style="left:99.75px;top:395.65px;font-size:7.56px;font-weight:bold;color:#35368f;transform:scaleX(0.953);">pfflex-3726532</div>
<div class="t n" style="left:99.75px;top:408.87px;font-size:7.12px;font-weight:normal;color:#5c5c5c;transform:scaleX(0.916);">Liza Ashkhanyan</div>
<div class="t" style="left:160.40px;top:398.16px;font-size:5.96px;font-weight:bold;color:#1e1e1e;transform:scaleX(1.017);">Text</div>
<div class="t n" style="left:160.40px;top:407.57px;font-size:7.12px;font-weight:normal;color:#6a6a6a;transform:scaleX(0.899);">Al Mutarad, Al Ain</div>
<div class="t" style="left:245.10px;top:396.01px;font-size:8.14px;font-weight:bold;color:#1e1e1e;transform:scaleX(0.760);">1</div>
<svg class="abs" style="left:251.39999999999998px;top:395.0px" width="8.3" height="8" viewBox="0 0 8.5 8"><path d="M0.75 0V7.9" stroke="#555" stroke-width="1.3"/><path d="M1.3 7.3H7.9V7.9" fill="none" stroke="#555" stroke-width="1"/><path d="M1.3 7.2V4.9H7.8V7.2" fill="none" stroke="#555" stroke-width="0.9"/><path d="M2.2 4.9C2.3 3.9 3 3.4 3.9 3.4C4.9 3.4 5.7 3.9 5.9 4.9" fill="none" stroke="#555" stroke-width="0.9"/></svg>
<div class="t" style="left:263.00px;top:396.01px;font-size:8.14px;font-weight:bold;color:#1e1e1e;transform:scaleX(0.760);">3</div>
<svg class="abs" style="left:269px;top:394.7px" width="9.2" height="8.7" viewBox="0 0 8.5 8"><path d="M0.9 4.6V1.2H3V2.3" fill="none" stroke="#2a2a2a" stroke-width="0.85"/><path d="M0.5 4.3H8V5.4C8 6.6 7.2 7.4 6 7.4H2.5C1.3 7.4 0.5 6.6 0.5 5.4Z" fill="none" stroke="#2a2a2a" stroke-width="0.85"/></svg>
<div class="t n" style="left:245.10px;top:408.37px;font-size:7.12px;font-weight:normal;color:#6a6a6a;transform:scaleX(0.946);">4,500 sqft</div>
<div class="t" style="left:296.00px;top:395.70px;font-size:7.56px;font-weight:bold;color:#222;transform:scaleX(0.951);">Duplex</div>
<div class="t n" style="left:296.00px;top:408.87px;font-size:7.12px;font-weight:normal;color:#6a6a6a;transform:scaleX(0.911);">Rent</div>
<div class="t n" style="left:340.00px;top:395.70px;font-size:7.56px;font-weight:normal;color:#7a7a7a;transform:scaleX(0.882);">AED</div>
<div class="t" style="left:355.10px;top:395.70px;font-size:7.56px;font-weight:bold;color:#222;transform:scaleX(0.955);">70,000/Y</div>
<div class="t n" style="left:340.00px;top:408.87px;font-size:7.12px;font-weight:normal;color:#6a6a6a;transform:scaleX(0.931);">Residential</div>
<div class="t" style="left:395.60px;top:395.70px;font-size:7.56px;font-weight:bold;color:#1e1e1e;transform:scaleX(0.893);">1 hour ago</div>
<div class="t" style="left:395.60px;top:408.87px;font-size:7.12px;font-weight:bold;color:#6c6c6c;transform:scaleX(0.850);">11 months ...</div>
<svg class="abs" style="left:448px;top:396.8px" width="11.2" height="10.8" viewBox="0 0 11.2 10.8"><path d="M0.4 4.2L5.6 0.4L10.8 4.2V10.4H0.4Z" fill="#2f4ea6"/><path d="M2.2 4.4L5.6 2L9 4.4L5.6 6.8Z" fill="#fff"/><path d="M2.5 10L5.6 7.6L8.7 10" fill="none" stroke="#4a6ac0" stroke-width="0.5"/></svg>
<div class="abs" style="left:471.85px;top:400.2px;width:47.15px;height:10.6px;border:1px solid #86d98f;border-radius:2px;background:transparent"></div>
<div class="t m" style="left:477.75px;top:402.15px;font-size:7.27px;font-weight:normal;color:#2fa83e;transform:scaleX(0.929);">Publish</div>
<svg class="abs" style="left:505.65000000000003px;top:402.4px" width="8.6" height="6" viewBox="0 0 8.6 6"><path d="M2 5.5H6.6C7.6 5.5 8.1 4.8 8.1 4.1C8.1 3.3 7.5 2.8 6.8 2.8C6.5 1.5 5.6 0.6 4.4 0.6C3.1 0.6 2.2 1.6 2.1 2.8C1.2 2.9 0.5 3.4 0.5 4.2C0.5 5 1.1 5.5 2 5.5Z" fill="none" stroke="#35b545" stroke-width="0.85"/></svg>
<div class="abs" style="left:533.4px;top:402.1px;width:14.4px;height:6px;border-radius:3px;background:rgba(0,0,0,0.11)"></div>
<div class="abs" style="left:529.4px;top:400.4px;width:10.6px;height:10.6px;border-radius:50%;background:#b6b6b6"></div>
<div class="t" style="left:572.60px;top:397.21px;font-size:6.25px;font-weight:bold;color:#858585;transform:scaleX(0.916);">Not Eligible</div>
<div class="abs" style="left:572.3px;top:406.2px;width:49px;height:10.8px;border:1px solid #b9b2e0;border-radius:2px;box-shadow:0 0.6px 0 #d0d0d0"></div>
<svg class="abs" style="left:577.0999999999999px;top:408.3px" width="6.6" height="6.6" viewBox="0 0 6.6 6.6"><circle cx="3.3" cy="3.3" r="2.8" fill="none" stroke="#5b52b2" stroke-width="0.75"/><path d="M2.3 3.9L3.3 2.6L4.3 3.9" fill="none" stroke="#5b52b2" stroke-width="0.8"/></svg>
<div class="t m" style="left:586.80px;top:407.95px;font-size:7.27px;font-weight:normal;color:#4d44a8;transform:scaleX(0.956);">Get Top 3</div>
<div class="abs" style="left:660.3px;top:401.2px;width:8.4px;height:8.5px;border:1.3px solid #5e5e5e;border-radius:1.5px"></div>
<svg class="abs" style="left:680.7px;top:394.6px" width="6.8" height="4.6" viewBox="0 0 6.8 4.6"><path d="M0.6 0.7L3.4 3.6L6.2 0.7" fill="none" stroke="#1e1e1e" stroke-width="1.3"/></svg>
<svg class="abs" style="left:681.7px;top:409.1px" width="7.2" height="8.8" viewBox="0 0 7.2 8.8"><path d="M2 3.8V2.5C2 1.5 2.7 0.8 3.6 0.8C4.5 0.8 5.2 1.5 5.2 2.5V3.8" fill="none" stroke="#777" stroke-width="0.9"/><rect x="0.6" y="3.8" width="6" height="4.5" rx="0.8" fill="none" stroke="#777" stroke-width="0.9"/><rect x="3.2" y="5.5" width="0.8" height="1.2" fill="#777"/></svg>
<div class="abs" style="left:78.1px;top:427px;width:625.4px;height:44px;background:#fdfcfd;border-bottom:1.2px solid #eaeaeb"></div>
<div class="abs" style="left:82.2px;top:432.7px;width:2.8px;height:33.5px;background:#b0111a;border-radius:1.4px;box-shadow:0 0 0.5px #e02020"></div>
<div class="t" style="left:99.75px;top:439.65px;font-size:7.56px;font-weight:bold;color:#35368f;transform:scaleX(0.953);">pfflex-3726529</div>
<div class="t n" style="left:99.75px;top:452.87px;font-size:7.12px;font-weight:normal;color:#5c5c5c;transform:scaleX(0.916);">Liza Ashkhanyan</div>
<div class="t" style="left:160.40px;top:442.16px;font-size:5.96px;font-weight:bold;color:#1e1e1e;transform:scaleX(1.017);">Text</div>
<div class="t n" style="left:160.40px;top:451.57px;font-size:7.12px;font-weight:normal;color:#6a6a6a;transform:scaleX(0.899);">Al Mutarad, Al Ain</div>
<div class="t" style="left:245.10px;top:440.01px;font-size:8.14px;font-weight:bold;color:#1e1e1e;transform:scaleX(0.760);">1</div>
<svg class="abs" style="left:251.39999999999998px;top:439.0px" width="8.3" height="8" viewBox="0 0 8.5 8"><path d="M0.75 0V7.9" stroke="#555" stroke-width="1.3"/><path d="M1.3 7.3H7.9V7.9" fill="none" stroke="#555" stroke-width="1"/><path d="M1.3 7.2V4.9H7.8V7.2" fill="none" stroke="#555" stroke-width="0.9"/><path d="M2.2 4.9C2.3 3.9 3 3.4 3.9 3.4C4.9 3.4 5.7 3.9 5.9 4.9" fill="none" stroke="#555" stroke-width="0.9"/></svg>
<div class="t" style="left:263.00px;top:440.01px;font-size:8.14px;font-weight:bold;color:#1e1e1e;transform:scaleX(0.760);">3</div>
<svg class="abs" style="left:269px;top:438.7px" width="9.2" height="8.7" viewBox="0 0 8.5 8"><path d="M0.9 4.6V1.2H3V2.3" fill="none" stroke="#2a2a2a" stroke-width="0.85"/><path d="M0.5 4.3H8V5.4C8 6.6 7.2 7.4 6 7.4H2.5C1.3 7.4 0.5 6.6 0.5 5.4Z" fill="none" stroke="#2a2a2a" stroke-width="0.85"/></svg>
<div class="t n" style="left:245.10px;top:452.37px;font-size:7.12px;font-weight:normal;color:#6a6a6a;transform:scaleX(0.946);">4,500 sqft</div>
<div class="t" style="left:296.00px;top:439.70px;font-size:7.56px;font-weight:bold;color:#222;transform:scaleX(0.951);">Duplex</div>
<div class="t n" style="left:296.00px;top:452.87px;font-size:7.12px;font-weight:normal;color:#6a6a6a;transform:scaleX(0.911);">Rent</div>
<div class="t n" style="left:340.00px;top:439.70px;font-size:7.56px;font-weight:normal;color:#7a7a7a;transform:scaleX(0.882);">AED</div>
<div class="t" style="left:355.10px;top:439.70px;font-size:7.56px;font-weight:bold;color:#222;transform:scaleX(0.955);">70,000/Y</div>
<div class="t n" style="left:340.00px;top:452.87px;font-size:7.12px;font-weight:normal;color:#6a6a6a;transform:scaleX(0.931);">Residential</div>
<div class="t" style="left:395.60px;top:439.70px;font-size:7.56px;font-weight:bold;color:#1e1e1e;transform:scaleX(0.893);">1 hour ago</div>
<div class="t" style="left:395.60px;top:452.87px;font-size:7.12px;font-weight:bold;color:#6c6c6c;transform:scaleX(0.850);">11 months ...</div>
<svg class="abs" style="left:449.1px;top:443.4px" width="9.5" height="7.5" viewBox="0 0 9.5 7.5"><path d="M0.6 3.8L3 6.3L8.9 0.6" fill="none" stroke="#2fae3c" stroke-width="1.3"/></svg>
<div class="abs" style="left:471.85px;top:444.2px;width:47.15px;height:10.6px;border:1px solid #86d98f;border-radius:2px;background:transparent"></div>
<div class="t m" style="left:477.75px;top:446.15px;font-size:7.27px;font-weight:normal;color:#2fa83e;transform:scaleX(0.929);">Publish</div>
<svg class="abs" style="left:505.65000000000003px;top:446.4px" width="8.6" height="6" viewBox="0 0 8.6 6"><path d="M2 5.5H6.6C7.6 5.5 8.1 4.8 8.1 4.1C8.1 3.3 7.5 2.8 6.8 2.8C6.5 1.5 5.6 0.6 4.4 0.6C3.1 0.6 2.2 1.6 2.1 2.8C1.2 2.9 0.5 3.4 0.5 4.2C0.5 5 1.1 5.5 2 5.5Z" fill="none" stroke="#35b545" stroke-width="0.85"/></svg>
<div class="abs" style="left:533.4px;top:446.1px;width:14.4px;height:6px;border-radius:3px;background:rgba(0,0,0,0.11)"></div>
<div class="abs" style="left:529.4px;top:444.4px;width:10.6px;height:10.6px;border-radius:50%;background:#b6b6b6"></div>
<div class="t" style="left:572.60px;top:441.21px;font-size:6.25px;font-weight:bold;color:#858585;transform:scaleX(0.916);">Not Eligible</div>
<div class="abs" style="left:572.3px;top:450.2px;width:49px;height:10.8px;border:1px solid #b9b2e0;border-radius:2px;box-shadow:0 0.6px 0 #d0d0d0"></div>
<svg class="abs" style="left:577.0999999999999px;top:452.3px" width="6.6" height="6.6" viewBox="0 0 6.6 6.6"><circle cx="3.3" cy="3.3" r="2.8" fill="none" stroke="#5b52b2" stroke-width="0.75"/><path d="M2.3 3.9L3.3 2.6L4.3 3.9" fill="none" stroke="#5b52b2" stroke-width="0.8"/></svg>
<div class="t m" style="left:586.80px;top:451.95px;font-size:7.27px;font-weight:normal;color:#4d44a8;transform:scaleX(0.956);">Get Top 3</div>
<div class="abs" style="left:660.3px;top:445.2px;width:8.4px;height:8.5px;border:1.3px solid #5e5e5e;border-radius:1.5px"></div>
<svg class="abs" style="left:680.7px;top:438.6px" width="6.8" height="4.6" viewBox="0 0 6.8 4.6"><path d="M0.6 0.7L3.4 3.6L6.2 0.7" fill="none" stroke="#1e1e1e" stroke-width="1.3"/></svg>
<svg class="abs" style="left:681.7px;top:453.1px" width="7.2" height="8.8" viewBox="0 0 7.2 8.8"><path d="M2 3.8V2.5C2 1.5 2.7 0.8 3.6 0.8C4.5 0.8 5.2 1.5 5.2 2.5V3.8" fill="none" stroke="#777" stroke-width="0.9"/><rect x="0.6" y="3.8" width="6" height="4.5" rx="0.8" fill="none" stroke="#777" stroke-width="0.9"/><rect x="3.2" y="5.5" width="0.8" height="1.2" fill="#777"/></svg>
<div class="abs" style="left:78.1px;top:471px;width:625.4px;height:44px;background:#fdfcfd;border-bottom:1.2px solid #eaeaeb"></div>
<div class="abs" style="left:82.2px;top:476.7px;width:2.8px;height:33.5px;background:#b0111a;border-radius:1.4px;box-shadow:0 0 0.5px #e02020"></div>
<div class="t" style="left:99.75px;top:483.65px;font-size:7.56px;font-weight:bold;color:#35368f;transform:scaleX(0.953);">pfflex-3725017</div>
<div class="t n" style="left:99.75px;top:496.87px;font-size:7.12px;font-weight:normal;color:#5c5c5c;transform:scaleX(0.916);">Liza Ashkhanyan</div>
<div class="t" style="left:160.40px;top:486.16px;font-size:5.96px;font-weight:bold;color:#1e1e1e;transform:scaleX(1.017);">Text</div>
<div class="t n" style="left:160.40px;top:495.57px;font-size:7.12px;font-weight:normal;color:#6a6a6a;transform:scaleX(0.899);">Al Mutarad, Al Ain</div>
<div class="t" style="left:245.10px;top:484.01px;font-size:8.14px;font-weight:bold;color:#1e1e1e;transform:scaleX(0.760);">1</div>
<svg class="abs" style="left:251.39999999999998px;top:483.0px" width="8.3" height="8" viewBox="0 0 8.5 8"><path d="M0.75 0V7.9" stroke="#555" stroke-width="1.3"/><path d="M1.3 7.3H7.9V7.9" fill="none" stroke="#555" stroke-width="1"/><path d="M1.3 7.2V4.9H7.8V7.2" fill="none" stroke="#555" stroke-width="0.9"/><path d="M2.2 4.9C2.3 3.9 3 3.4 3.9 3.4C4.9 3.4 5.7 3.9 5.9 4.9" fill="none" stroke="#555" stroke-width="0.9"/></svg>
<div class="t" style="left:263.00px;top:484.01px;font-size:8.14px;font-weight:bold;color:#1e1e1e;transform:scaleX(0.760);">3</div>
<svg class="abs" style="left:269px;top:482.7px" width="9.2" height="8.7" viewBox="0 0 8.5 8"><path d="M0.9 4.6V1.2H3V2.3" fill="none" stroke="#2a2a2a" stroke-width="0.85"/><path d="M0.5 4.3H8V5.4C8 6.6 7.2 7.4 6 7.4H2.5C1.3 7.4 0.5 6.6 0.5 5.4Z" fill="none" stroke="#2a2a2a" stroke-width="0.85"/></svg>
<div class="t n" style="left:245.10px;top:496.37px;font-size:7.12px;font-weight:normal;color:#6a6a6a;transform:scaleX(0.946);">4,500 sqft</div>
<div class="t" style="left:296.00px;top:483.70px;font-size:7.56px;font-weight:bold;color:#222;transform:scaleX(0.951);">Duplex</div>
<div class="t n" style="left:296.00px;top:496.87px;font-size:7.12px;font-weight:normal;color:#6a6a6a;transform:scaleX(0.911);">Rent</div>
<div class="t n" style="left:340.00px;top:483.70px;font-size:7.56px;font-weight:normal;color:#7a7a7a;transform:scaleX(0.882);">AED</div>
<div class="t" style="left:355.10px;top:483.70px;font-size:7.56px;font-weight:bold;color:#222;transform:scaleX(0.955);">70,000/Y</div>
<div class="t n" style="left:340.00px;top:496.87px;font-size:7.12px;font-weight:normal;color:#6a6a6a;transform:scaleX(0.931);">Residential</div>
<div class="t" style="left:395.60px;top:483.70px;font-size:7.56px;font-weight:bold;color:#1e1e1e;transform:scaleX(0.893);">1 hour ago</div>
<div class="t" style="left:395.60px;top:496.87px;font-size:7.12px;font-weight:bold;color:#6c6c6c;transform:scaleX(0.850);">11 months ...</div>
<svg class="abs" style="left:449.1px;top:487.4px" width="9.5" height="7.5" viewBox="0 0 9.5 7.5"><path d="M0.6 3.8L3 6.3L8.9 0.6" fill="none" stroke="#2fae3c" stroke-width="1.3"/></svg>
<div class="abs" style="left:471.85px;top:488.2px;width:47.15px;height:10.6px;border:1px solid #86d98f;border-radius:2px;background:transparent"></div>
<div class="t m" style="left:477.75px;top:490.15px;font-size:7.27px;font-weight:normal;color:#2fa83e;transform:scaleX(0.929);">Publish</div>
<svg class="abs" style="left:505.65000000000003px;top:490.4px" width="8.6" height="6" viewBox="0 0 8.6 6"><path d="M2 5.5H6.6C7.6 5.5 8.1 4.8 8.1 4.1C8.1 3.3 7.5 2.8 6.8 2.8C6.5 1.5 5.6 0.6 4.4 0.6C3.1 0.6 2.2 1.6 2.1 2.8C1.2 2.9 0.5 3.4 0.5 4.2C0.5 5 1.1 5.5 2 5.5Z" fill="none" stroke="#35b545" stroke-width="0.85"/></svg>
<div class="abs" style="left:533.4px;top:490.1px;width:14.4px;height:6px;border-radius:3px;background:rgba(0,0,0,0.11)"></div>
<div class="abs" style="left:529.4px;top:488.4px;width:10.6px;height:10.6px;border-radius:50%;background:#b6b6b6"></div>
<div class="t" style="left:572.60px;top:485.21px;font-size:6.25px;font-weight:bold;color:#858585;transform:scaleX(0.916);">Not Eligible</div>
<div class="abs" style="left:572.3px;top:494.2px;width:49px;height:10.8px;border:1px solid #b9b2e0;border-radius:2px;box-shadow:0 0.6px 0 #d0d0d0"></div>
<svg class="abs" style="left:577.0999999999999px;top:496.3px" width="6.6" height="6.6" viewBox="0 0 6.6 6.6"><circle cx="3.3" cy="3.3" r="2.8" fill="none" stroke="#5b52b2" stroke-width="0.75"/><path d="M2.3 3.9L3.3 2.6L4.3 3.9" fill="none" stroke="#5b52b2" stroke-width="0.8"/></svg>
<div class="t m" style="left:586.80px;top:495.95px;font-size:7.27px;font-weight:normal;color:#4d44a8;transform:scaleX(0.956);">Get Top 3</div>
<div class="abs" style="left:660.3px;top:489.2px;width:8.4px;height:8.5px;border:1.3px solid #5e5e5e;border-radius:1.5px"></div>
<svg class="abs" style="left:680.7px;top:482.6px" width="6.8" height="4.6" viewBox="0 0 6.8 4.6"><path d="M0.6 0.7L3.4 3.6L6.2 0.7" fill="none" stroke="#1e1e1e" stroke-width="1.3"/></svg>
<svg class="abs" style="left:681.7px;top:497.1px" width="7.2" height="8.8" viewBox="0 0 7.2 8.8"><path d="M2 3.8V2.5C2 1.5 2.7 0.8 3.6 0.8C4.5 0.8 5.2 1.5 5.2 2.5V3.8" fill="none" stroke="#777" stroke-width="0.9"/><rect x="0.6" y="3.8" width="6" height="4.5" rx="0.8" fill="none" stroke="#777" stroke-width="0.9"/><rect x="3.2" y="5.5" width="0.8" height="1.2" fill="#777"/></svg>
<div class="abs" style="left:475.6px;top:470.3px;width:54.2px;height:25px;background:#757575;border-radius:3px"></div>
<div class="t" style="left:485.60px;top:475.65px;font-size:9.16px;font-weight:normal;color:#f2f2f2;transform:scaleX(1.055);">Preview</div>
<div class="abs" style="left:773px;top:467.9px;width:40px;height:30px;background:#0a0a0a;border-radius:3px;box-shadow:0 0 22px 8px rgba(0,0,0,0.10)"></div>
<div class="abs" style="left:775.9px;top:470.9px;width:30px;height:30px;background:#fbfbfc"></div>
<div class="abs" style="left:775.9px;top:470.9px;width:30px;height:3.9px;background:#3f229a"></div>
<div class="abs" style="left:786px;top:471.3px;width:2.8px;height:2.8px;border-radius:50%;background:#fff"></div>
<div class="abs" style="left:789.5px;top:472.2px;width:6px;height:1.2px;background:#9a8ad0"></div>
<div class="abs" style="left:775.9px;top:475px;width:30px;height:3.6px;background:#eeeef2"></div>
<div class="abs" style="left:787px;top:476.2px;width:12px;height:0.6px;background:#c0c0c8"></div>
<div class="abs" style="left:787px;top:483.5px;width:4.5px;height:1px;background:#d8d8d8"></div>
<div class="abs" style="left:787px;top:487.5px;width:6px;height:1px;background:#d8d8d8"></div>
</body></html>
